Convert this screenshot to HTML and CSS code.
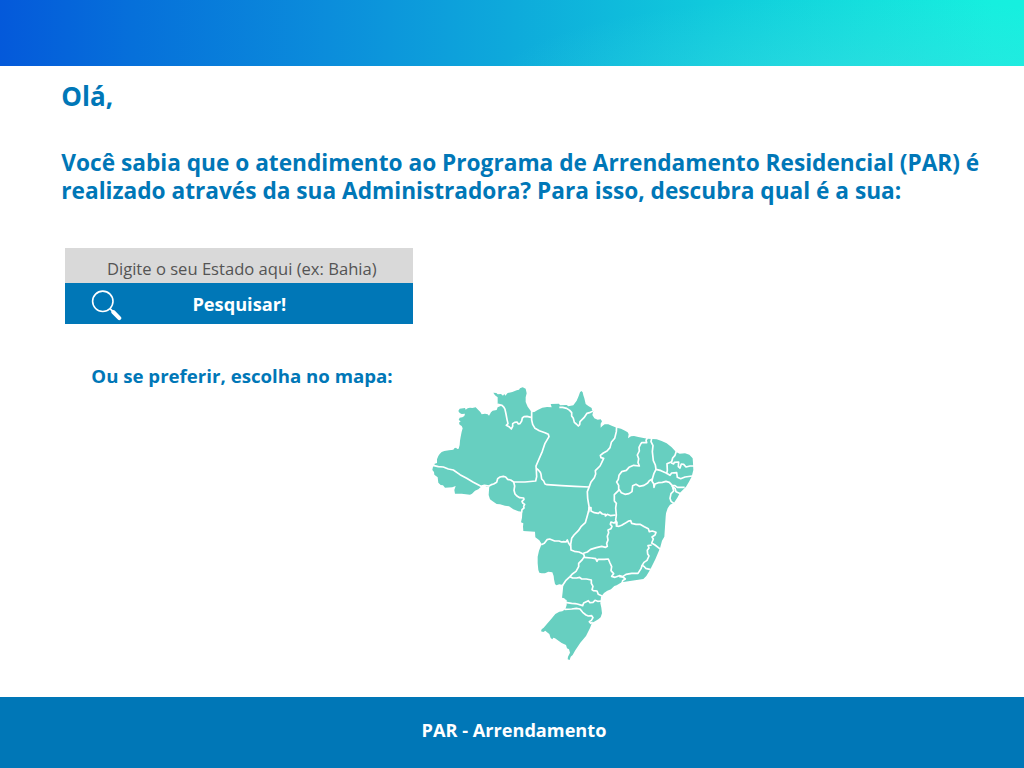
FILE: index.html
```html
<!DOCTYPE html>
<html lang="pt-BR">
<head>
<meta charset="utf-8">
<title>PAR - Arrendamento</title>
<link rel="stylesheet" href="styles.css">
</head>
<body>
<div class="page">
  <header class="banner"></header>
  <main class="content">
    <h1 class="greeting">Olá,</h1>
    <p class="intro">Você sabia que o atendimento ao Programa de Arrendamento Residencial (PAR) é<br>realizado através da sua Administradora? Para isso, descubra qual é a sua:</p>
    <form class="search">
      <input class="search-input" type="text" placeholder="Digite o seu Estado aqui (ex: Bahia)">
      <button class="search-button" type="button">
        <svg class="search-icon" viewBox="0 0 32 32" aria-hidden="true">
          <circle cx="12.8" cy="12.3" r="10.2" fill="none" stroke="#fff" stroke-width="1.6"/>
          <path d="M20 19.7l3 3" stroke="#fff" stroke-width="1.8"/>
          <path d="M23.3 23l6 6.1" stroke="#fff" stroke-width="4" stroke-linecap="round"/>
        </svg>
        <span>Pesquisar!</span>
      </button>
    </form>
    <div class="map-row">
      <p class="map-label">Ou se preferir, escolha no mapa:</p>
      <svg class="map" viewBox="0 0 840 870" role="img" aria-label="Mapa do Brasil">
        <path class="land" d="M22 270L24 260 28 256 29 251 36 249 36 238 40 228 44 222 50 216 58 213 72 211 85 209 88 205 93 203 97 207 101 206 104 195 105 182 107 170 110 155 113 145 110 138 104 134 102 128 107 124 101 120 104 113 112 112 118 108 120 101 110 102 104 99 100 93 104 86 120 84 122 89 128 85 135 83 142 84 152 82 160 90 166 96 170 103 180 101 188 103 192 107 198 97 203 92 215 90 218 82 229 77 218 71 218 52 210 46 205 38 214 39 218 43 228 42 234 47 238 42 241 47 248 39 262 36 275 31 282 29 285 25 293 22 302 26 305 40 302 52 302 66 308 80 320 97 328 96 338 90 352 83 366 81 380 82 377 72 402 71 405 76 425 75 430 79 445 76 455 62 461 48 465 37 469 33 473 37 475 46 478 55 482 72 490 78 500 84 501 91 505 94 502 105 508 115 518 119 527 118 531 124 527 131 527 143 532 138 539 133 550 133 560 137 575 143 588 146 600 152 608 157 611 163 609 175 618 169 627 168 640 171 667 176 695 178 710 183 725 190 740 202 753 216 764 221 780 220 793 224 803 235 804 250 805 270 800 290 792 305 783 320 765 338 757 353 747 368 735 374 728 385 723 400 722 410 720 440 718 470 711 482 705 505 691 538 675 570 664 588 655 597 630 601 590 607 575 616 568 618 558 628 547 632 537 639 528 650 526 670 529 683 531 700 527 712 520 718 510 724 501 728 495 744 483 768 466 788 450 812 443 825 437 830 434 840 428 838 429 830 435 818 432 808 426 805 423 795 410 789 390 775 385 773 382 778 377 774 373 762 366 757 361 752 355 756 348 754 350 748 356 743 365 733 378 718 391 702 403 695 412 694 421 688 425 675 425 660 420 658 418 655 411 653 413 636 415 615 403 613 394 616 390 612 387 598 386 588 382 577 370 575 360 580 350 580 343 578 340 570 338 550 338 530 342 512 350 492 343 481 331 472 330 455 295 453 294 440 295 430 288 427 291 413 292 395 280 394 265 388 252 379 240 377 225 373 215 372 203 364 195 358 191 345 192 330 193 319 185 320 177 316 168 320 160 328 150 332 141 341 135 344 110 341 90 341 88 330 92 318 82 322 60 323 54 316 47 315 40 308 38 292 28 284 27 276Z"/>
        <g class="borders">
          <path d="M24 256L40 260 55 261 70 267 85 270 105 284 125 295 145 307 168 319 178 316 192 318 199 314 206 312 215 307 218 296 225 291 235 289 242 291 248 298 257 300 266 306 300 306 332 303 335 290 334 270 333 258 352 214 360 190 372 170 370 163 360 158 343 152 330 145 323 133 320 120 320 94"/>
          <path d="M218 73L231 76 237 82 240 88 243 102 246 118 249 131 244 136 252 140 259 147 263 139 263 131 269 127 276 126 280 132 285 131 290 123 292 114 297 110 306 109 318 112"/>
          <path d="M266 306L269 318 267 331 270 342 277 349 284 353 296 354 297 358 291 364 293 369 299 373 296 379 297 384 291 389 290 397"/>
          <path d="M334 265L340 270 346 277 348 283 350 297 356 303 360 312 366 314 410 317 450 319 492 321"/>
          <path d="M403 82L413 82 425 85 434 91 440 98 440 108 445 115 448 127 454 132 460 138 464 134 465 125 477 113 486 100 496 97 504 94"/>
          <path d="M575 138L574 155 569 175 559 187 555 203 546 213 535 219 526 226 528 233 536 235 530 248 525 258 511 272 512 282 508 293 498 306 492 322 487 335 488 355 493 385 487 407 481 428 468 440 460 452 447 465 440 475 437 493 438 510 448 514 462 516 475 522"/>
          <path d="M667 174L663 181 665 188 650 188 647 192 642 202 643 213 637 225 641 236 639 248 643 258 626 256 612 262 604 271 590 275 582 286 580 298 575 306 581 316 581 331 568 344 568 363 574 370 572 384 574 405 572 420 576 428 575 437"/>
          <path d="M582 328L589 338 600 343 612 341 621 335 623 317 633 313 643 319 657 316 668 309 673 302 682 297 681 304 686 311 687 322 690 312 700 308 712 307 723 304 733 307 742 317 750 317 757 322 779 322"/>
          <path d="M740 318L750 325 753 335 767 341M743 322L746 333 738 341 735 355 738 364 749 372"/>
          <path d="M680 175L678 185 684 197 682 215 685 242 691 255 693 268 708 272 725 280 727 271 726 251 740 245 743 234 750 226 754 214"/>
          <path d="M738 248L746 252 748 247 761 246 760 260 765 264 769 252 776 253 783 261 795 258 808 258"/>
          <path d="M725 280L735 286 740 279 755 278 757 292 767 296 780 291 802 288M693 268L687 280 682 297"/>
          <path d="M491 397L492 383 498 383 498 393 508 398 520 400 525 396 532 402 541 403 541 408 547 403 557 407 572 405"/>
          <path d="M575 437L572 425 567 429 558 426 556 433 561 439 558 446 549 450 551 458 547 469 549 480 545 490 547 499 542 502 530 499 514 503 497 508 487 516 475 520"/>
          <path d="M572 438L582 439 590 436 600 430 611 423 617 422 620 430 633 433 645 433 658 440 670 446 673 455 682 453 693 457 690 465 681 471 685 477 680 489 690 495 707 508"/>
          <path d="M680 495L669 497 672 504 667 511 668 522 672 528 666 541 657 547 651 557 648 566 639 580 620 580 603 583 593 590 583 587 570 592 560 589 566 581 558 572 560 560 555 549 550 537 538 538 519 538 516 544 512 536 499 534 477 532"/>
          <path d="M650 555L658 560 662 565 677 569M583 590L594 591 601 597 593 602 591 611"/>
          <path d="M349 494L358 490 366 479 374 477 389 483 402 483 410 486 416 485 423 486 427 480 431 490 437 498"/>
          <path d="M475 520L478 529 472 539 461 550 461 560 453 574 442 582 435 590 422 602 412 617"/>
          <path d="M435 590L443 594 455 594 464 592 470 597 484 597 499 600 499 610 504 619 501 629 505 632 516 633 520 643 531 648"/>
          <path d="M421 667L440 670 450 671 457 672 473 677 476 669 490 662 495 668 504 667 510 661 518 664 530 663"/>
          <path d="M419 688L440 687 454 685 465 687 473 697 483 705 490 708 500 707 504 713 499 721 493 725 497 730 503 727"/>
        </g>
      </svg>
    </div>
  </main>
  <footer class="footer">PAR - Arrendamento</footer>
</div>
</body>
</html>
```
FILE: styles.css
```css
* {
  box-sizing: border-box;
}

body {
  margin: 0;
  background: #fff;
  font-family: "Open Sans", "Noto Sans", sans-serif;
  color: #0077b7;
}

.page {
  display: flex;
  flex-direction: column;
  width: 1024px;
  height: 768px;
  overflow: hidden;
}

.banner {
  flex: none;
  height: 66px;
  background:
    radial-gradient(ellipse 360px 90px at 850px 86px, rgba(64, 220, 226, 0.5), rgba(64, 220, 226, 0.22) 55%, rgba(64, 220, 226, 0)),
    linear-gradient(90deg, #0459da 0%, #0670da 13%, #0b8ddb 32%, #0eaadb 50%, #10cbdc 70%, #14e0dd 85%, #16efdf 97%, #16f0df 100%);
}

.content {
  flex: 1;
  min-height: 0;
  padding: 13px 0 0 61.3px;
}

.greeting {
  margin: 0;
  font-size: 26px;
  font-weight: 700;
  line-height: 34px;
}

.intro {
  margin: 36px 0 0;
  font-size: 22.66px;
  font-weight: 700;
  line-height: 28px;
  white-space: nowrap;
}

.search {
  display: flex;
  flex-direction: column;
  width: 348px;
  margin: 43px 0 0 4px;
}

.search-input {
  height: 35.4px;
  padding: 5px 0 0 5px;
  border: 0;
  border-radius: 0;
  background: #d9d9d9;
  font: 400 16.6px "Open Sans", sans-serif;
  text-align: center;
}

.search-input::placeholder {
  color: #545454;
  opacity: 1;
}

.search-button {
  display: grid;
  grid-template-columns: 80px 1fr 80px;
  align-items: center;
  height: 41px;
  padding: 0;
  border: 0;
  background: #0077b7;
  color: #fff;
  font: 700 18.2px "Open Sans", sans-serif;
}

.search-icon {
  width: 32px;
  height: 32px;
  margin: 2px 0 0 25px;
}

.map-row {
  display: flex;
  align-items: flex-start;
  margin-top: 38.6px;
}

.map-label {
  width: 333.7px;
  margin: 0;
  padding-left: 30px;
  font-size: 18.65px;
  font-weight: 700;
  line-height: 25px;
  white-space: nowrap;
}

.map {
  flex: none;
  width: 280px;
  height: 290px;
  margin: 17px 0 0 30px;
}

.land {
  fill: #67cfc0;
}

.borders {
  fill: none;
  stroke: #fff;
  stroke-width: 5;
  stroke-linejoin: round;
}

.footer {
  display: flex;
  flex: none;
  align-items: center;
  justify-content: center;
  height: 71px;
  padding: 0 0 6px 4px;
  background: #0077b7;
  color: #fff;
  font-size: 18.15px;
  font-weight: 700;
}
```
